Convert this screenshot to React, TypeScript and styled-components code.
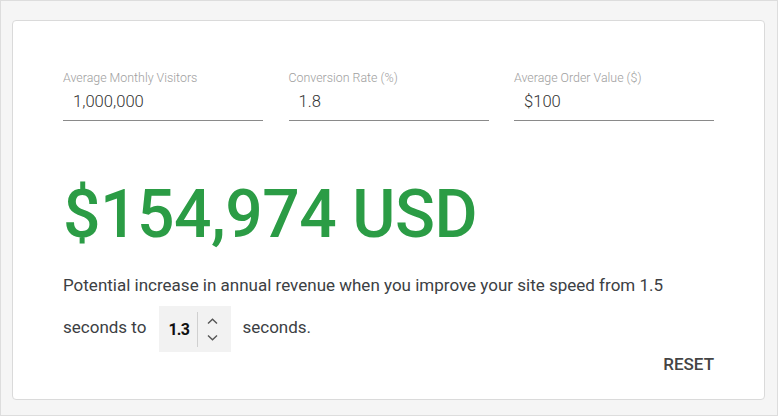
import styled, { createGlobalStyle } from 'styled-components';

const GlobalStyle = createGlobalStyle`
  html, body {
    margin: 0;
    padding: 0;
    background: #f5f5f5;
  }
  * {
    box-sizing: border-box;
  }
`;

const fields = [
  { label: 'Average Monthly Visitors', value: '1,000,000' },
  { label: 'Conversion Rate (%)', value: '1.8' },
  { label: 'Average Order Value ($)', value: '$100' },
];

const App = () => {
  return (
    <>
      <GlobalStyle />
      <Page>
        <Card>
          <Fields>
            {fields.map((f) => (
              <Field key={f.label}>
                <Label>{f.label}</Label>
                <Value>{f.value}</Value>
              </Field>
            ))}
          </Fields>
          <Total>$154,974 USD</Total>
          <Sentence>
            Potential increase in annual revenue when you improve your site speed from 1.5 seconds to
            <Stepper>
              <StepValue>1.3</StepValue>
              <StepArrows>
                <svg width="11" height="7" viewBox="0 0 11 7">
                  <path d="M1 5.5 L5.5 1.2 L10 5.5" fill="none" stroke="#555" strokeWidth="1.4" />
                </svg>
                <svg width="11" height="7" viewBox="0 0 11 7">
                  <path d="M1 1.5 L5.5 5.8 L10 1.5" fill="none" stroke="#555" strokeWidth="1.4" />
                </svg>
              </StepArrows>
            </Stepper>
            seconds.
          </Sentence>
          <Actions>
            <ResetButton>RESET</ResetButton>
          </Actions>
        </Card>
      </Page>
    </>
  );
};

const Page = styled.div`
  width: 778px;
  height: 416px;
  border: 1px solid #dddddd;
  background: #f5f5f5;
  padding: 19px 12px 15px 11px;
`;

const Card = styled.div`
  height: 100%;
  background: #ffffff;
  border: 1px solid #dadada;
  border-radius: 4px;
  padding: 50px 50px 0 50px;
  font-family: Roboto, 'Liberation Sans', sans-serif;
`;

const Fields = styled.div`
  display: grid;
  grid-template-columns: repeat(3, 200px);
  justify-content: space-between;
`;

const Field = styled.div`
  display: flex;
  flex-direction: column;
`;

const Label = styled.div`
  font-size: 12.4px;
  line-height: 14px;
  font-weight: 300;
  color: #9e9e9e;
`;

const Value = styled.div`
  font-size: 16.6px;
  line-height: 20px;
  font-weight: 300;
  color: #333333;
  padding: 7px 0 8px 10px;
  border-bottom: 1px solid #8a8a8a;
`;

const Total = styled.div`
  margin-top: 54px;
  font-size: 66px;
  line-height: 80px;
  font-weight: 500;
  color: #2b9c45;
  letter-spacing: -0.5px;
`;

const Sentence = styled.div`
  margin-top: 10px;
  font-size: 17px;
  line-height: 41px;
  color: #3c4043;
  width: 630px;
`;

const Stepper = styled.span`
  display: inline-flex;
  align-items: center;
  vertical-align: middle;
  height: 46px;
  width: 72px;
  margin: 0 11px 0 13px;
  background: #f2f2f2;
  padding: 0 0 0 9px;
`;

const StepValue = styled.span`
  font-weight: 700;
  font-size: 16px;
  color: #111;
  letter-spacing: -0.8px;
  width: 30px;
  padding-right: 9px;
  border-right: 1px solid #d0d0d0;
  line-height: 35px;
`;

const StepArrows = styled.span`
  display: flex;
  flex-direction: column;
  gap: 9px;
  padding-left: 9px;
`;

const Actions = styled.div`
  display: flex;
  justify-content: flex-end;
`;

const ResetButton = styled.button`
  border: none;
  background: none;
  padding: 0;
  margin-top: 2px;
  font-family: Roboto, 'Liberation Sans', sans-serif;
  font-size: 17px;
  line-height: 20px;
  font-weight: 500;
  color: #444444;
  cursor: pointer;
`;

export default App;
